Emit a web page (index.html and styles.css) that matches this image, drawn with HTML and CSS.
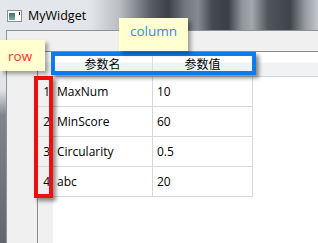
FILE: index.html
```html
<!DOCTYPE html>
<html lang="zh-CN">
<head>
  <meta charset="UTF-8" />
  <title>MyWidget</title>
  <link rel="stylesheet" href="styles.css">
</head>
<body>
  <div class="window">
    <div class="titlebar">
      <svg class="app-icon" width="15" height="12" viewBox="0 0 15 12">
        <defs>
          <linearGradient id="pane" x1="0" y1="0" x2="0" y2="1">
            <stop offset="0" stop-color="#3d6f8e" />
            <stop offset="1" stop-color="#7fae9a" />
          </linearGradient>
        </defs>
        <rect x="0.5" y="0.5" width="14" height="11" fill="#fff" stroke="#8c8f94" />
        <rect x="2" y="3" width="6" height="7" fill="url(#pane)" />
        <rect x="12" y="2" width="1" height="3" fill="#222" />
      </svg>
      <span class="title">MyWidget</span>
    </div>

    <div class="body">
      <div class="frame-edge"></div>
      <div class="client">
        <div class="table-frame">
          <div class="grid">
            <div class="corner"></div>
            <div class="hsection">参数名</div>
            <div class="hsection">参数值</div>
            <div class="hfill"></div>

            <div class="vsection">1</div>
            <div class="cell">MaxNum</div>
            <div class="cell">10</div>
            <div class="fill"></div>

            <div class="vsection">2</div>
            <div class="cell">MinScore</div>
            <div class="cell">60</div>
            <div class="fill"></div>

            <div class="vsection">3</div>
            <div class="cell">Circularity</div>
            <div class="cell">0.5</div>
            <div class="fill"></div>

            <div class="vsection">4</div>
            <div class="cell">abc</div>
            <div class="cell">20</div>
            <div class="fill"></div>
          </div>
        </div>
      </div>
    </div>

    <div class="mark mark-col"></div>
    <div class="mark mark-row"></div>
    <div class="tip tip-row">row</div>
    <div class="tip tip-col">column</div>
  </div>
</body>
</html>
```

FILE: styles.css
```css
body {
  margin: 0;
  font-family: "Open Sans", "Noto Sans CJK SC", sans-serif;
  font-size: 12px;
  color: #000;
  overflow: hidden;
}
.window {
  position: relative;
  width: 318px;
  height: 243px;
  display: flex;
  flex-direction: column;
  overflow: hidden;
}
.titlebar {
  height: 30px;
  display: flex;
  align-items: center;
  padding-left: 7px;
  box-sizing: border-box;
  background: linear-gradient(to right,
    #e4e8ec 0px, #e2e5e9 90px, #b9bdc1 120px, #5b6068 150px,
    #3c4149 168px, #737880 185px, #868b93 198px, #454a52 212px,
    #3a3f47 228px, #8f959c 242px, #a3a8ae 252px, #50555d 268px,
    #3f444c 290px, #9a9fa5 306px, #c3c7cb 318px);
}
.app-icon {
  display: block;
  margin-right: 6px;
  margin-top: 1px;
}
.title {
  font-size: 12.5px;
  color: #000;
}
.body {
  flex: 1;
  display: flex;
  min-height: 0;
}
.frame-edge {
  width: 6px;
  background: linear-gradient(to bottom, #e6e8ea 0%, #e2e4e6 28%, #80858d 40%, #62676f 100%);
}
.client {
  flex: 1;
  background: #f0f0f0;
  border-top: 1px solid #8e9297;
  border-left: 1px solid #8e9297;
  padding: 20px 0 0 30px;
}
.table-frame {
  height: 100%;
  border-top: 1px solid #8c8c8c;
  border-left: 1px solid #8c8c8c;
  background: linear-gradient(to right, #f0f0f0 15px, #fff 15px);
}
.grid {
  display: grid;
  grid-template-columns: 15px 100px 100px 1fr;
  grid-template-rows: 25px repeat(4, 30px);
}
.grid > div {
  box-sizing: border-box;
}
.corner,
.hsection,
.hfill {
  background: linear-gradient(to bottom, #fff 0%, #fff 42%, #f1f2f4 46%, #f1f2f4 100%);
  border-bottom: 1px solid #d5d5d5;
}
.corner {
  border-right: 1px solid #d5d5d5;
}
.hsection {
  border-right: 1px solid #dcdcdc;
  text-align: center;
  line-height: 24px;
  font-family: "Noto Sans CJK SC", sans-serif;
}
.vsection {
  text-align: right;
  padding-right: 3px;
  line-height: 30px;
  border-bottom: 1px solid #d8d8d8;
}
.cell {
  border-right: 1px solid #d8d8d8;
  border-bottom: 1px solid #d8d8d8;
  padding-left: 4px;
  line-height: 29px;
}
.mark {
  position: absolute;
  box-sizing: border-box;
  border-width: 4px;
  border-style: solid;
  box-shadow: 3px 3px 4px rgba(0, 0, 0, 0.45);
}
.mark-col {
  left: 51px;
  top: 52px;
  width: 205px;
  height: 23px;
  border-color: #0b7cf0;
}
.mark-row {
  left: 34px;
  top: 76px;
  width: 19px;
  height: 122px;
  border-color: #ec1010;
}
.tip {
  position: absolute;
  box-sizing: border-box;
  background: #ffffcf;
  box-shadow: 3px 3px 4px rgba(0, 0, 0, 0.35);
  font-size: 13.5px;
}
.tip-row {
  left: 0;
  top: 40px;
  width: 45px;
  height: 31px;
  padding: 7px 0 0 8px;
  color: #ff3030;
}
.tip-col {
  left: 119px;
  top: 18px;
  width: 69px;
  height: 33px;
  padding: 4px 0 0 11px;
  color: #2a8cff;
}
```
